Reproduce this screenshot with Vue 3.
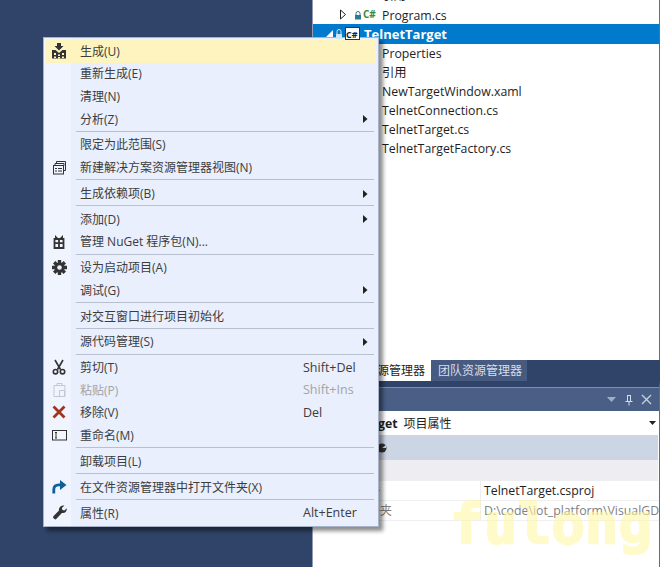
<script setup>
const items = [
  { t: '生成(U)', icon: 'build', hot: true },
  { t: '重新生成(E)' },
  { t: '清理(N)' },
  { t: '分析(Z)', sub: true },
  { sep: true },
  { t: '限定为此范围(S)' },
  { t: '新建解决方案资源管理器视图(N)', icon: 'view' },
  { sep: true },
  { t: '生成依赖项(B)', sub: true },
  { sep: true },
  { t: '添加(D)', sub: true },
  { t: '管理 NuGet 程序包(N)...', icon: 'nuget' },
  { sep: true },
  { t: '设为启动项目(A)', icon: 'gear' },
  { t: '调试(G)', sub: true },
  { sep: true },
  { t: '对交互窗口进行项目初始化' },
  { sep: true },
  { t: '源代码管理(S)', sub: true },
  { sep: true },
  { t: '剪切(T)', key: 'Shift+Del', icon: 'cut' },
  { t: '粘贴(P)', key: 'Shift+Ins', icon: 'paste', off: true },
  { t: '移除(V)', key: 'Del', icon: 'remove' },
  { t: '重命名(M)', icon: 'rename' },
  { sep: true },
  { t: '卸载项目(L)' },
  { sep: true },
  { t: '在文件资源管理器中打开文件夹(X)', icon: 'open' },
  { sep: true },
  { t: '属性(R)', key: 'Alt+Enter', icon: 'wrench' }
]
const files = ['Properties', '引用', 'NewTargetWindow.xaml', 'TelnetConnection.cs', 'TelnetTarget.cs', 'TelnetTargetFactory.cs']
</script>

<template>
  <div class="screen">
    <div class="backdrop"></div>
    <div class="side">
      <div class="tree">
        <div class="clip">引用</div>
        <div class="row program">
          <svg class="exp" width="8" height="11" viewBox="0 0 8 11"><path d="M1.500 1v9l5-4.500z" fill="#fff" stroke="#222" /></svg>
          <svg class="lock" width="8" height="9" viewBox="0 0 8 9"><path d="M2 4V2.500a2 2 0 0 1 4 0V4" fill="none" stroke="#2b7c93" /><rect x="1" y="4" width="6" height="4.500" fill="#2b7c93" /></svg>
          <span class="cs">C#</span>
          <span>Program.cs</span>
        </div>
        <div class="row selected">
          <span class="sel-name">TelnetTarget</span>
        </div>
        <div v-for="f in files" :key="f" class="row file">{{ f }}</div>
      </div>
      <div class="tabs">
        <div class="tab on">解决方案资源管理器</div>
        <div class="tab">团队资源管理器</div>
      </div>
      <div class="prop">
        <div class="prop-title">
          <svg width="9" height="5" viewBox="0 0 9 5"><path d="M0 0h9L4.500 5z" fill="#9fb0c8" /></svg>
          <svg width="10" height="12" viewBox="0 0 10 12" fill="none" stroke="#d5dce8"><path d="M3 1.500h4M3.500 1.500v6M6.500 1.500v6M1.500 7.500h7M5 7.500v4" /></svg>
          <svg width="11" height="11" viewBox="0 0 11 11" fill="none" stroke="#c9d2e0" stroke-width="1.300"><path d="M1 1l9 9M10 1l-9 9" /></svg>
        </div>
        <div class="prop-combo">
          <span><b>TelnetTarget</b><span class="combo-sub">项目属性</span></span>
          <svg width="7" height="4" viewBox="0 0 7 4"><path d="M0 0h7L3.500 4z" fill="#222" /></svg>
        </div>
        <div class="prop-tools">
          <svg width="10" height="10" viewBox="0 0 10 10"><circle cx="5" cy="5" r="4.500" fill="#333" /><path d="M5 5l4-3v3z" fill="#ccd5e4" /></svg>
        </div>
        <div class="prop-cat"></div>
        <div class="prop-row"><span class="pn">项目文件</span><span class="pv">TelnetTarget.csproj</span></div>
        <div class="prop-row dim"><span class="pn">项目文件夹</span><span class="pv">D:\code\iot_platform\VisualGDB\TelnetTarget</span></div>
      </div>
    </div>

    <div class="mark">fulong</div>

    <div class="menu">
      <template v-for="(it, i) in items" :key="i">
        <div v-if="it.sep" class="sep"></div>
        <div v-else class="item" :class="{ hot: it.hot, off: it.off }">
          <span class="ico">
            <svg v-if="it.icon === 'build'" width="16" height="16" viewBox="0 0 16 16"><path d="M6 0h4v3h2.500L8 7.500 3.500 3H6z" fill="#333" /><path d="M1 7h3.500L8 10l3.500-3H15v8.500H1z" fill="#333" /><path d="M3 10h2v2H3zM7 11.500h2V13H7zM11 10h2v2h-2zM3 13.500h2V15H3zM7 14h2v1.500H7zM11 13.500h2V15h-2z" fill="#fdf4bf" /></svg>
            <svg v-else-if="it.icon === 'view'" width="15" height="15" viewBox="0 0 15 15" fill="none" stroke="#333"><path d="M4.500 3.500V1.500h9v9h-2" /><path d="M3 5.500V3.500h9v2" /><rect x="1.500" y="5.500" width="10" height="8.500" /><path d="M3 8.500h2M6 8.500h4M3 11h2M6 11h4" /></svg>
            <svg v-else-if="it.icon === 'nuget'" width="14" height="15" viewBox="0 0 14 15"><path d="M2.500 5h9v9h-9z" fill="none" stroke="#333" stroke-width="1.800" /><path d="M2 9.200h10M7 5v9" stroke="#333" stroke-width="1.800" /><path d="M3 1l3.500 3.500H3zM11 1L7.500 4.500H11z" fill="#333" /></svg>
            <svg v-else-if="it.icon === 'gear'" width="15" height="15" viewBox="0 0 15 15"><g fill="#333"><circle cx="7.500" cy="7.500" r="5.200" /><path d="M5.800 0h3.400v3H5.800zM5.800 12h3.400v3H5.800zM0 5.800h3v3.400H0zM12 5.800h3v3.400h-3z" /><path d="M1 3.400L3.400 1l2.400 2.400-2.400 2.400zM11.600 1L14 3.400l-2.400 2.400-2.400-2.400zM1 11.600l2.400-2.400 2.400 2.400L3.400 14zM9.200 11.600l2.400-2.400 2.400 2.400-2.400 2.400z" /></g><circle cx="7.500" cy="7.500" r="2.300" fill="#e9effc" /></svg>
            <svg v-else-if="it.icon === 'cut'" width="14" height="16" viewBox="0 0 14 16" fill="none" stroke="#333" stroke-width="1.600"><path d="M3 1l5.500 9.500M11 1L5.500 10.500" /><circle cx="3.500" cy="12.700" r="2.200" /><circle cx="10.500" cy="12.700" r="2.200" /></svg>
            <svg v-else-if="it.icon === 'paste'" width="13" height="15" viewBox="0 0 13 15" fill="none" stroke="#c3c7cf"><path d="M1 3.500h11v11H1z" /><path d="M4 3.500V1.500h5v2M6.500 8.500h5v6h-5z" /></svg>
            <svg v-else-if="it.icon === 'remove'" width="14" height="14" viewBox="0 0 14 14" fill="none" stroke="#a1341a" stroke-width="2.800"><path d="M1.500 1.500l11 11M12.500 1.500l-11 11" /></svg>
            <svg v-else-if="it.icon === 'rename'" width="15" height="11" viewBox="0 0 15 11" fill="none" stroke="#333"><rect x=".5" y=".5" width="14" height="9.500" fill="#f4f6fb" /><path d="M3 2.500h2M3 8h2M4 2.500V8" /></svg>
            <svg v-else-if="it.icon === 'open'" width="15" height="14" viewBox="0 0 15 14"><path d="M1.800 13.500V9.500C1.800 6.500 4 4.800 7 4.800h2" fill="none" stroke="#0e6198" stroke-width="2.800" /><path d="M8 0l6.500 5L8 10z" fill="#0e6198" /></svg>
            <svg v-else-if="it.icon === 'wrench'" width="15" height="15" viewBox="0 0 15 15"><path d="M14.700 3.200c.5 3-1.800 5.500-4.800 4.800L4.200 14c-1.200 1.400-4.200-1.300-2.800-2.800L7 5.500C6.400 2.500 9 0 12.400.5L9.900 3l.5 2 2 .5z" fill="#333" /></svg>
          </span>
          <span class="label">{{ it.t }}</span>
          <span v-if="it.key" class="key">{{ it.key }}</span>
          <svg v-if="it.sub" class="arrow" width="5" height="8" viewBox="0 0 5 8"><path d="M0 0l4.500 4L0 8z" fill="#222" /></svg>
        </div>
      </template>
    </div>

    <svg class="tree-ico" width="45" height="16" viewBox="0 0 45 16">
      <path d="M7 3v7H0z" fill="#fff" transform="translate(1 1)" />
      <path d="M12 8V5.500a2 2 0 0 1 4 0V8" fill="none" stroke="#cfe6f7" />
      <rect x="11" y="8" width="6" height="5" fill="#cfe6f7" />
      <rect x="20.500" y="1.500" width="14" height="12" fill="#fff" stroke="#333" />
    </svg>
    <span class="tree-cs">C#</span>
  </div>
</template>

<style scoped>
.screen {
  position: relative;
  width: 660px;
  height: 567px;
  overflow: hidden;
  display: flex;
  font-family: "Open Sans", "Noto Sans CJK SC", sans-serif;
  color: #1e1e1e;
}
.backdrop {
  width: 312px;
  background: #2f4468;
  flex: none;
}
.side {
  width: 348px;
  display: flex;
  flex-direction: column;
  background: #fff;
  border-left: 1px solid #8f9cb3;
  box-sizing: border-box;
}
.tree {
  height: 360px;
  flex: none;
  border-right: 1px solid #5a6d8c;
  box-sizing: border-box;
  font-size: 12.3px;
}
.clip {
  height: 10px;
  margin-top: -4px;
  padding-left: 69px;
  line-height: 0;
  font-size: 12px;
}
.row {
  height: 19px;
  line-height: 19px;
  padding-left: 69px;
  white-space: nowrap;
}
.program {
  position: relative;
  height: 18px;
}
.exp { position: absolute; left: 26px; top: 3px; }
.lock { position: absolute; left: 41px; top: 5px; }
.cs { position: absolute; left: 50px; top: -1px; font-size: 10px; font-weight: 700; color: #3c8a3c; }
.selected {
  height: 20px;
  line-height: 20px;
  background: #007acc;
  color: #fff;
  font-weight: 700;
}
.sel-name { margin-left: -18px; font-size: 13px; }
.tabs {
  height: 21px;
  display: flex;
  background: #2f4468;
  flex: none;
  font-size: 12px;
}
.tab {
  line-height: 21px;
  padding: 0 5px 0 7px;
  color: #d6deeb;
  background: #475a7f;
  white-space: nowrap;
}
.tab.on {
  width: 118px;
  box-sizing: border-box;
  background: #fff;
  color: #1e1e1e;
  padding: 0 6px 0 0;
  direction: rtl;
  overflow: hidden;
}
.prop {
  flex: 1;
  display: flex;
  flex-direction: column;
  border-top: 6px solid #2f4468;
  border-right: 1px solid #5a6d8c;
}
.prop-title {
  height: 24px;
  background: #4a5f86;
  border-top: 1px solid #7e8fae;
  box-sizing: border-box;
  display: flex;
  align-items: center;
  justify-content: flex-end;
  gap: 7.500px;
  padding-right: 7px;
}
.prop-combo {
  height: 24px;
  display: flex;
  justify-content: space-between;
  align-items: center;
  padding: 0 3px 0 6px;
  font-size: 12.3px;
  white-space: nowrap;
}
.combo-sub { margin-left: 6px; font-size: 12px; }
.prop-tools {
  height: 25px;
  background: #ccd5e4;
  margin-right: 1px;
  display: flex;
  align-items: center;
  padding-left: 64px;
}
.prop-cat {
  height: 21px;
  background: #eeeef2;
  margin-right: 1px;
}
.prop-row {
  height: 19px;
  display: flex;
  font-size: 12.3px;
  line-height: 19px;
  border-bottom: 1px solid #f0f0f0;
  white-space: nowrap;
  overflow: hidden;
}
.pn { width: 168px; flex: none; padding-left: 19px; box-sizing: border-box; border-right: 1px solid #eee; font-size: 12px; }
.pv { padding-left: 3px; }
.dim { color: #808080; }
.mark {
  position: absolute;
  left: 450px;
  top: 484px;
  font-family: "DejaVu Sans Mono", monospace;
  font-weight: 700;
  font-size: 56px;
  line-height: 80px;
  color: #fff7a8;
  -webkit-text-stroke: 2px #fff7a8;
  opacity: .6;
  white-space: nowrap;
}
.menu {
  position: absolute;
  left: 43px;
  top: 37px;
  width: 336px;
  height: 490px;
  box-sizing: border-box;
  padding: 1px 2px;
  background: linear-gradient(90deg, #f0f4fe 0, #f0f4fe 27px, #e9effc 27px);
  border: 1px solid #a9b3c7;
  box-shadow: 4px 4px 4px rgba(0, 0, 0, .45);
  font-size: 12px;
  color: #3c3c3c;
}
.item {
  position: relative;
  height: 22.600px;
  display: flex;
  align-items: center;
  white-space: nowrap;
}
.item.hot { background: #fdf4bf; height: 24px; margin-bottom: -.900px; }
.item.off { color: #a2a4a5; }
.ico {
  width: 26px;
  flex: none;
  display: flex;
  justify-content: center;
  align-items: center;
}
.label { margin-left: 8px; }
.key { position: absolute; left: 257px; font-size: 12.500px; }
.arrow { position: absolute; left: 317px; top: 8px; }
.sep {
  height: 3.250px;
  margin-left: 30px;
  display: flex;
  align-items: center;
}
.sep::before {
  content: "";
  display: block;
  width: 100%;
  height: 1px;
  margin-right: 2px;
  background: #b8c0cf;
}
.tree-ico { position: absolute; left: 325px; top: 26px; }
.tree-cs { position: absolute; left: 346px; top: 28px; font-size: 9px; font-weight: 700; color: #222; }
</style>
